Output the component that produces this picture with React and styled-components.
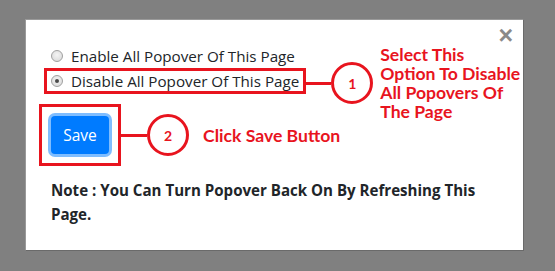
import React from "react";
import styled, { createGlobalStyle } from "styled-components";

const GlobalStyle = createGlobalStyle`
  html, body {
    margin: 0;
    padding: 0;
    background: #808080;
  }
  body {
    font-family: "Open Sans", "Liberation Sans", sans-serif;
    color: #212529;
  }
`;

const Page = styled.div`
  width: 555px;
  height: 271px;
  padding: 19px 0 0 25px;
  box-sizing: border-box;
`;

const Modal = styled.div`
  position: relative;
  width: 499px;
  height: 232px;
  box-sizing: border-box;
  background: #ffffff;
  border: 1px solid #6a6a6a;
  border-top-color: #9a9a9a;
  border-left-color: #9a9a9a;
  padding: 26px 0 0 18px;
`;

const CloseButton = styled.span`
  position: absolute;
  top: 3px;
  right: 10px;
  font-family: "Liberation Sans", sans-serif;
  font-size: 25px;
  font-weight: 700;
  color: #8a8a8a;
  line-height: 1;
`;

const OptionSection = styled.div`
  display: flex;
  align-items: flex-start;
  height: 48px;
`;

const OptionsColumn = styled.div`
  display: flex;
  flex-direction: column;
`;

const OptionRow = styled.label`
  display: flex;
  align-items: center;
  gap: 8px;
  height: 20px;
  padding-left: ${(p) => (p.$boxed ? 4 : 7)}px;
  font-size: 15.2px;
  color: #212529;
`;

const RedBox = styled.div`
  border: 3px solid #e8141e;
  padding: ${(p) => p.$pad || "0"};
  display: flex;
  align-items: center;
`;

const Radio = styled.span`
  width: 10px;
  height: 10px;
  border-radius: 50%;
  border: 1px solid #a0a0a0;
  background: radial-gradient(circle at 50% 40%, #f4f4f4, #d6d6d6);
  display: inline-flex;
  align-items: center;
  justify-content: center;
  flex-shrink: 0;
  &::after {
    content: "";
    width: 4px;
    height: 4px;
    border-radius: 50%;
    background: ${(p) => (p.$checked ? "#4a4a4a" : "transparent")};
  }
`;

const Connector = styled.div`
  width: ${(p) => p.$w}px;
  height: 3px;
  background: #e8141e;
`;

const Step = styled.div`
  width: 36px;
  height: 36px;
  border-radius: 50%;
  border: 3px solid #e8141e;
  display: flex;
  align-items: center;
  justify-content: center;
  font-family: "Lato", sans-serif;
  font-weight: 700;
  font-size: 14px;
  color: #e8141e;
  flex-shrink: 0;
`;

const Callout = styled.div`
  display: flex;
  align-items: center;
`;

const Note = styled.div`
  font-family: "Lato", "Open Sans", sans-serif;
  font-weight: 700;
  font-size: 17.6px;
  line-height: 19px;
  color: #e8141e;
  white-space: nowrap;
  margin-left: ${(p) => p.$ml || 0}px;
`;

const SaveSection = styled.div`
  display: flex;
  align-items: center;
  margin: 10px 0 0 -5px;
`;

const SaveButton = styled.button`
  width: 58px;
  height: 38px;
  border: none;
  border-radius: 4px;
  background: #007bff;
  color: #fff;
  font-family: "Open Sans", sans-serif;
  font-size: 15.5px;
  box-shadow: 0 0 0 3px rgba(0, 123, 255, 0.5);
  padding: 0;
`;

const FooterNote = styled.p`
  margin: 12px 0 0 7px;
  width: 440px;
  font-size: 15.1px;
  font-weight: 700;
  line-height: 24px;
  color: #212529;
`;

export default function App() {
  return (
    <>
      <GlobalStyle />
      <Page>
        <Modal>
          <CloseButton>×</CloseButton>
          <OptionSection>
            <OptionsColumn>
              <OptionRow>
                <Radio />
                Enable All Popover Of This Page
              </OptionRow>
              <RedBox $pad="0 4px 0 0" style={{ marginTop: 2, height: 20 }}>
                <OptionRow $boxed>
                  <Radio $checked />
                  Disable All Popover Of This Page
                </OptionRow>
              </RedBox>
            </OptionsColumn>
            <Callout style={{ marginTop: 16 }}>
              <Connector $w={25} />
              <Step>1</Step>
            </Callout>
            <Note $ml={7} style={{ marginTop: -1 }}>
              Select This
              <br />
              Option To Disable
              <br />
              All Popovers Of
              <br />
              The Page
            </Note>
          </OptionSection>
          <SaveSection>
            <RedBox $pad="9px 9px">
              <SaveButton>Save</SaveButton>
            </RedBox>
            <Connector $w={26} />
            <Step>2</Step>
            <Note $ml={14}>Click Save Button</Note>
          </SaveSection>
          <FooterNote>
            Note : You Can Turn Popover Back On By Refreshing This Page.
          </FooterNote>
        </Modal>
      </Page>
    </>
  );
}
